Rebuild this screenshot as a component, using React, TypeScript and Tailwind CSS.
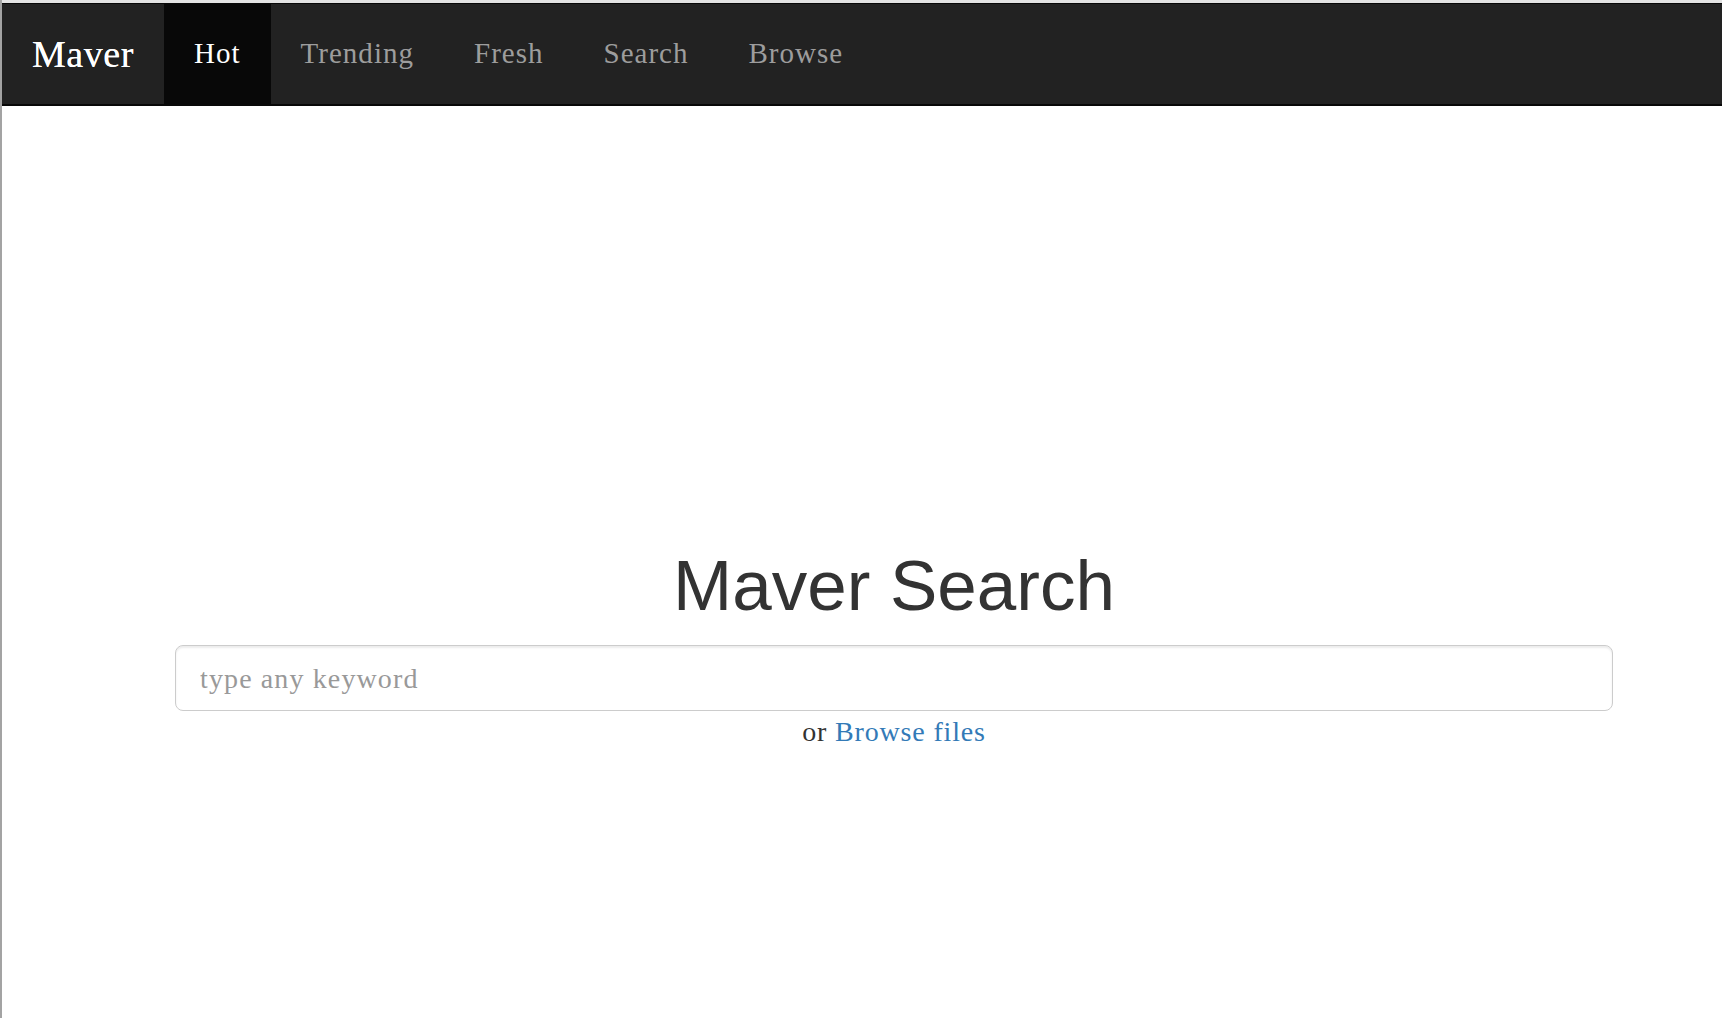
import React from "react";

const serif = { fontFamily: '"Liberation Serif", "Times New Roman", serif' };

const links = ["Hot", "Trending", "Fresh", "Search", "Browse"];

export default function App() {
  return (
    <div className="min-h-[1018px] w-full overflow-hidden bg-white border-l-2 border-[#a3a3a3]">
      <div className="h-[3px] bg-[#e3e3e3]" />
      <nav
        className="flex h-[103px] items-stretch bg-[#222222] border-t border-b-2 border-[#080808]"
        style={serif}
      >
        <a className="flex items-center px-[30px] text-[38px] tracking-[0.015em] text-white [text-shadow:0_0_0.4px_#fff]">
          Maver
        </a>
        <ul className="flex items-stretch">
          {links.map((item, index) => (
            <li key={item}>
              <a
                className={
                  index === 0
                    ? "flex h-full items-center px-[30px] text-[29px] tracking-[0.035em] bg-[#080808] text-white"
                    : "flex h-full items-center px-[30px] text-[29px] tracking-[0.035em] text-[#9d9d9d]"
                }
              >
                {item}
              </a>
            </li>
          ))}
        </ul>
      </nav>

      <main className="pt-[440px]">
        <h1
          className="pl-[64px] text-center text-[71px] leading-[79px] text-[#333333]"
          style={{ fontFamily: '"Liberation Sans", Arial, sans-serif' }}
        >
          Maver Search
        </h1>
        <div className="mt-[20px] ml-[173px] w-[1438px]">
          <input
            type="text"
            placeholder="type any keyword"
            className="h-[66px] w-full rounded-[8px] border border-[#cccccc] px-[24px] pt-[2px] text-[28px] tracking-[0.04em] text-[#555555] placeholder:text-[#999999] shadow-[inset_0_2px_2px_rgba(0,0,0,0.075)] outline-none"
            style={serif}
          />
        </div>
        <p
          className="mt-[1px] pl-[64px] text-center text-[28px] leading-[40px] tracking-[0.03em] text-[#333333]"
          style={serif}
        >
          or <a className="text-[#337ab7]">Browse files</a>
        </p>
      </main>
    </div>
  );
}
